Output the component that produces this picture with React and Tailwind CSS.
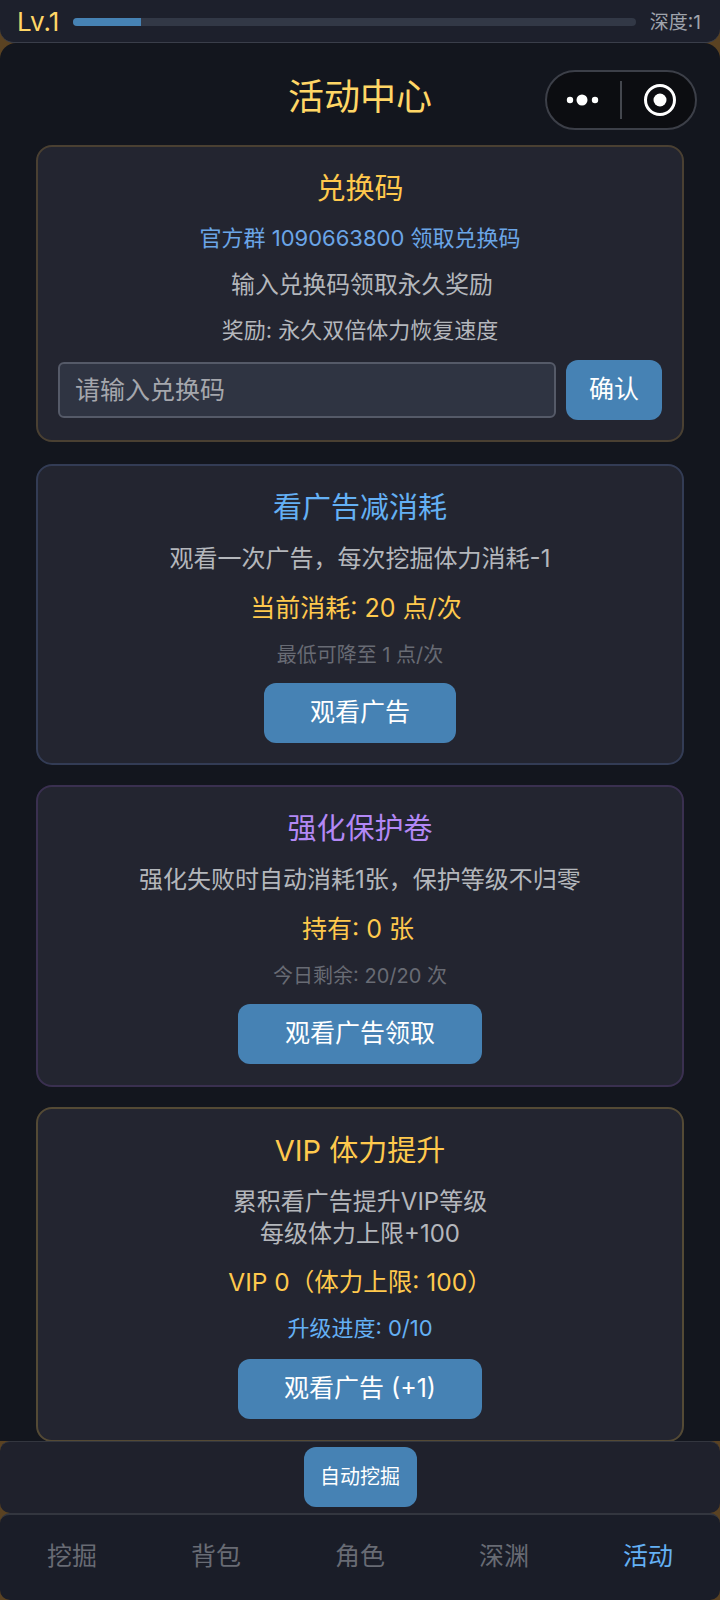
import React from "react";

const FONT = { fontFamily: '"Inter", "Noto Sans CJK SC", sans-serif' };

function Card({ border, children }) {
  return (
    <section className={`flex flex-col items-center rounded-[16px] border-2 bg-[#232530] px-5 pt-[20px] text-center ${border}`}>
      {children}
    </section>
  );
}

function Action({ children, width }) {
  return (
    <button className={`flex h-[60px] items-center justify-center rounded-[12px] bg-[#4682b4] text-[25px] text-white ${width}`}>
      {children}
    </button>
  );
}

export default function App() {
  const tabs = ["挖掘", "背包", "角色", "深渊", "活动"];
  return (
    <div style={FONT} className="flex h-[1600px] w-[720px] flex-col overflow-hidden bg-[#5a4222]">
      <header className="flex h-[43px] shrink-0 items-center gap-[14px] rounded-b-[14px] border-b border-[#3a3e4a] bg-[#1d202c] pl-[17px] pr-[19px] pt-[2px]">
        <span className="text-[26px] leading-none text-[#ffd666]">Lv.1</span>
        <div className="h-2 flex-1 overflow-hidden rounded-full bg-[#323846]">
          <div className="h-full w-[12%] bg-[#4682b4]" />
        </div>
        <span className="text-[19px] leading-none text-[#a0a4ac]">深度:1</span>
      </header>

      <main className="relative flex min-h-0 flex-1 flex-col overflow-hidden rounded-t-[16px] bg-[#13161e] px-9">
        <h1 className="absolute left-0 right-0 top-[28px] text-center text-[36px] leading-[52px] text-[#ffd666]">活动中心</h1>
        <div className="absolute right-[23px] top-[27px] flex h-[60px] w-[152px] items-center rounded-full border-2 border-[#3c3f48] bg-[#0c0d11]">
          <svg width="148" height="56" viewBox="0 0 148 56" fill="none">
            <circle cx="23" cy="28" r="3.2" fill="#fff" />
            <circle cx="35" cy="28" r="5.5" fill="#fff" />
            <circle cx="48" cy="28" r="3.2" fill="#fff" />
            <path d="M74 9V47" stroke="#44474e" strokeWidth="2" />
            <circle cx="113" cy="28" r="14.5" stroke="#fff" strokeWidth="3" />
            <circle cx="113" cy="28" r="6.5" fill="#fff" />
          </svg>
        </div>

        <div className="flex flex-col gap-[20px] pt-[102px]">
          <Card border="mb-[2px] border-[#4a4032]">
            <h2 className="text-[29px] leading-[44px] text-[#ffc94d]">兑换码</h2>
            <p className="mt-[11px] text-[22px] leading-[32px] text-[#6ba5e7]">官方群 1090663800 领取兑换码</p>
            <p className="mt-[14px] pl-[4px] text-[23.8px] leading-[34px] text-[#b4b7bc]">输入兑换码领取永久奖励</p>
            <p className="mt-[12px] text-[22px] leading-[32px] text-[#b4b7bc]">奖励: 永久双倍体力恢复速度</p>
            <div className="mt-[14px] flex w-full items-center gap-[10px] pb-[20px]">
              <input
                readOnly
                placeholder="请输入兑换码"
                className="h-[56px] min-w-0 flex-1 rounded-[6px] border-2 border-[#555a68] bg-[#2f3442] px-[15px] text-[25px] text-white outline-none placeholder:text-[#a5a7ad]"
              />
              <Action width="w-[96px] shrink-0">确认</Action>
            </div>
          </Card>

          <Card border="border-[#333c55]">
            <h2 className="text-[29px] leading-[44px] text-[#64b0f4]">看广告减消耗</h2>
            <p className="mt-[12px] text-[24px] leading-[34px] text-[#b4b7bc]">观看一次广告，每次挖掘体力消耗-1</p>
            <p className="mt-[15px] pr-[8px] text-[25px] leading-[34px] text-[#ffc94d]">当前消耗: 20 点/次</p>
            <p className="mt-[15px] text-[20px] leading-[30px] text-[#686b74]">最低可降至 1 点/次</p>
            <div className="mt-[13px] pb-[20px]"><Action width="w-[192px]">观看广告</Action></div>
          </Card>

          <Card border="border-[#3a3050]">
            <h2 className="text-[29px] leading-[44px] text-[#b388f5]">强化保护卷</h2>
            <p className="mt-[12px] text-[24px] leading-[34px] text-[#b4b7bc]">强化失败时自动消耗1张，保护等级不归零</p>
            <p className="mt-[15px] pr-[4px] text-[25px] leading-[34px] text-[#ffc94d]">持有: 0 张</p>
            <p className="mt-[15px] text-[20px] leading-[30px] text-[#686b74]">今日剩余: 20/20 次</p>
            <div className="mt-[13px] pb-[21px]"><Action width="w-[244px]">观看广告领取</Action></div>
          </Card>

          <Card border="border-[#544a35]">
            <h2 className="text-[29px] leading-[44px] text-[#ffc94d]">VIP 体力提升</h2>
            <p className="mt-[13px] text-[24px] leading-[32px] text-[#b4b7bc]">累积看广告提升VIP等级<br />每级体力上限+100</p>
            <p className="mt-[15px] text-[24.5px] leading-[34px] text-[#ffc94d]">VIP 0（体力上限: 100）</p>
            <p className="mt-[14px] text-[22px] leading-[30px] text-[#64b0f4]">升级进度: 0/10</p>
            <div className="mt-[16px] pb-[21px]"><Action width="w-[244px]">观看广告 (+1)</Action></div>
          </Card>
        </div>
      </main>

      <div className="flex h-[72px] shrink-0 items-center justify-center rounded-[10px] border-t border-[#33363f] bg-[#1f212c] pb-[2px]">
        <button className="h-[60px] w-[113px] rounded-[12px] bg-[#4682b4] text-[20px] text-white">自动挖掘</button>
      </div>
      <nav className="grid h-[87px] shrink-0 grid-cols-5 items-center rounded-[10px] border-t-2 border-[#33363f] bg-[#1a1d28] pb-[2px] text-center text-[25px]">
        {tabs.map((t, i) => (
          <span key={t} className={i === 4 ? "text-[#64b0f4]" : "text-[#686b74]"}>{t}</span>
        ))}
      </nav>
    </div>
  );
}
